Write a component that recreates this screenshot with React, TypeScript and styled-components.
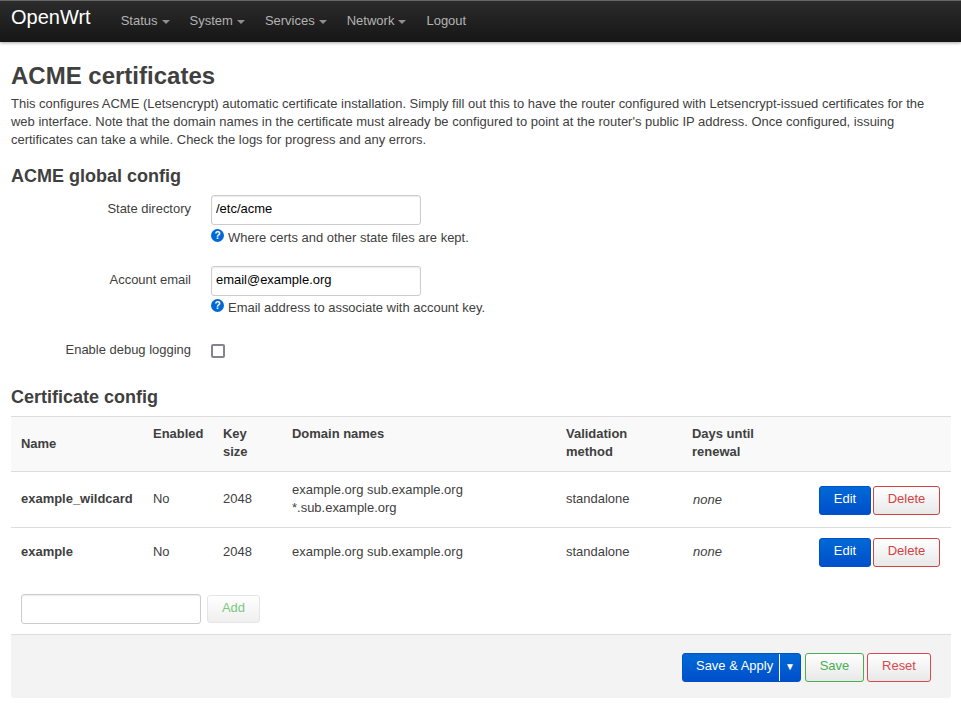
import styled, { createGlobalStyle, css } from "styled-components";

const GlobalStyle = createGlobalStyle`
  html, body {
    margin: 0;
    padding: 0;
    background: #fff;
    color: #404040;
    font-family: "Liberation Sans", Arial, sans-serif;
    font-size: 12.97px;
    line-height: 18px;
  }
  * { box-sizing: border-box; }
`;

const NavBar = styled.header`
  height: 42px;
  display: flex;
  align-items: stretch;
  padding-left: 11px;
  background: linear-gradient(to bottom, #2b2b2b, #161616);
  border-top: 1px solid #666;
  box-shadow: 0 1px 3px rgba(0, 0, 0, 0.35);
`;

const Brand = styled.a`
  color: #fff;
  font-size: 20px;
  line-height: 33px;
  margin-right: 20px;
`;

const NavItem = styled.a`
  color: #b3b3b3;
  font-size: 13px;
  height: 40px;
  padding: 0 10px;
  display: flex;
  align-items: center;
`;

const Caret = styled.span`
  display: inline-block;
  width: 0;
  height: 0;
  margin-left: 4px;
  margin-top: 2px;
  border-left: 4px solid transparent;
  border-right: 4px solid transparent;
  border-top: 4px solid #8f8f8f;
`;

const Main = styled.main`
  padding: 0 10px 0 11px;
`;

const Title = styled.h2`
  margin: 19px 0 0;
  font-size: 24px;
  line-height: 30px;
  font-weight: 700;
`;

const Intro = styled.p`
  margin: 4px 0 0;
`;

const SectionTitle = styled.h3<{ $top: number }>`
  margin: ${(p) => p.$top}px 0 0;
  font-size: 18px;
  line-height: 24px;
  font-weight: 700;
`;

const FieldRow = styled.div<{ $top: number }>`
  display: flex;
  margin-top: ${(p) => p.$top}px;
`;

const FieldLabel = styled.label`
  width: 180px;
  text-align: right;
  padding-top: 5px;
  margin-right: 20px;
  flex: none;
`;

const TextInput = styled.input<{ $width: number }>`
  display: block;
  width: ${(p) => p.$width}px;
  height: 30px;
  padding: 0 4px 3px;
  border: 1px solid #ccc;
  border-radius: 3px;
  background: #fff;
  color: #000;
  font: 12.97px/18px "Liberation Sans", Arial, sans-serif;
  box-shadow: inset 0 1px 1px rgba(0, 0, 0, 0.08);
  outline: none;
`;

const Hint = styled.div<{ $top: number }>`
  display: flex;
  align-items: flex-start;
  gap: 4px;
  margin-top: ${(p) => p.$top}px;
  height: 18px;
`;

const HelpIcon = styled.svg`
  width: 13px;
  height: 13px;
  flex: none;
`;

const CheckBox = styled.span`
  display: block;
  width: 14px;
  height: 14px;
  margin-top: 8px;
  border: 2px solid #85838e;
  border-radius: 2px;
  background: #fff;
`;

const Table = styled.table`
  width: 940px;
  margin-top: 7px;
  border-collapse: collapse;
  table-layout: fixed;
  border-top: 1px solid #ddd;
`;

const HeadRow = styled.tr`
  background: #f9f9f9;
`;

const HeadCell = styled.th<{ $top?: boolean }>`
  padding: 8px 10px;
  height: 55px;
  text-align: left;
  font-weight: 700;
  vertical-align: ${(p) => (p.$top ? "top" : "middle")};
  border-bottom: 1px solid #ddd;
`;

const Cell = styled.td<{ $height: number }>`
  padding: ${(p) => (p.$height > 50 ? "7px 10px 9px" : "8px 10px")};
  height: ${(p) => p.$height}px;
  border-bottom: ${(p) => (p.$height > 50 ? "1px solid #ddd" : "none")};
  vertical-align: middle;
`;

const NameCell = styled(Cell)`
  font-weight: 700;
`;

const NoneCell = styled(Cell)`
  padding: 8px 10px 8px 11px;
  font-style: italic;
`;

const ActionCell = styled(Cell)`
  padding: ${(p) => (p.$height > 50 ? "10px" : "8px")} 11px 8px 10px;
  text-align: right;
  white-space: nowrap;
`;

const buttonBase = css`
  display: inline-block;
  height: 29px;
  padding: 0 0 5px;
  border-radius: 3px;
  font: 12.97px/24px "Liberation Sans", Arial, sans-serif;
  vertical-align: top;
  text-align: center;
`;

const PrimaryButton = styled.button<{ $width: number }>`
  ${buttonBase}
  width: ${(p) => p.$width}px;
  color: #fff;
  border: 1px solid #0050c8;
  background: linear-gradient(to bottom, #0069d6, #004fcb);
`;

const OutlineButton = styled.button<{ $width: number; $tone: string; $gap?: number }>`
  ${buttonBase}
  width: ${(p) => p.$width}px;
  margin-left: ${(p) => p.$gap ?? 2}px;
  color: ${(p) => p.$tone};
  border: 1px solid ${(p) => p.$tone};
  background: linear-gradient(to bottom, #fff, #e8e8e8);
`;

const AddRow = styled.div`
  display: flex;
  align-items: flex-start;
  gap: 6px;
  margin-top: 17px;
  padding-left: 10px;
`;

const AddButton = styled.button`
  ${buttonBase}
  width: 53px;
  height: 28px;
  margin-top: 1px;
  padding-bottom: 3px;
  color: #79c87f;
  border: 1px solid #e6e6e6;
  background: linear-gradient(to bottom, #fff, #efefef);
`;

const ActionBar = styled.footer`
  display: flex;
  justify-content: flex-end;
  align-items: flex-start;
  height: 64px;
  margin-top: 10px;
  padding: 18px 20px 0 0;
  background: #f3f3f3;
  border-top: 1px solid #ddd;
  border-radius: 0 0 3px 3px;
`;

const SplitButton = styled.div`
  display: flex;
  width: 119px;
  height: 29px;
  color: #fff;
  border: 1px solid #0050c8;
  border-radius: 3px;
  background: linear-gradient(to bottom, #0069d6, #004fcb);
`;

const SplitLabel = styled.span`
  flex: 1;
  padding-left: 13px;
  line-height: 24px;
  white-space: nowrap;
  border-right: 1px solid #fff;
`;

const SplitArrow = styled.span`
  width: 20px;
  text-align: center;
  font-size: 10px;
  line-height: 26px;
`;

const Help = () => (
  <HelpIcon viewBox="0 0 16 16">
    <circle cx="8" cy="8" r="8" fill="#0069d6" />
    <text x="8" y="12.5" textAnchor="middle" fontSize="12.5" fontWeight="700" fill="#fff" fontFamily="Liberation Sans">
      ?
    </text>
  </HelpIcon>
);

const navItems = ["Status", "System", "Services", "Network"];

const columns = [132, 70, 69, 274, 126, 100, 169];

const certs = [
  { name: "example_wildcard", domains: ["example.org sub.example.org", "*.sub.example.org"], height: 56 },
  { name: "example", domains: ["example.org sub.example.org"], height: 49 },
];

function App() {
  return (
    <>
      <GlobalStyle />
      <NavBar>
        <Brand>OpenWrt</Brand>
        {navItems.map((item) => (
          <NavItem key={item}>
            {item}
            <Caret />
          </NavItem>
        ))}
        <NavItem>Logout</NavItem>
      </NavBar>
      <Main>
        <Title>ACME certificates</Title>
        <Intro>
          This configures ACME (Letsencrypt) automatic certificate installation. Simply fill out this to have the router
          configured with Letsencrypt-issued certificates for the web interface. Note that the domain names in the
          certificate must already be configured to point at the router's public IP address. Once configured, issuing
          certificates can take a while. Check the logs for progress and any errors.
        </Intro>

        <SectionTitle $top={15}>ACME global config</SectionTitle>
        <FieldRow $top={7}>
          <FieldLabel>State directory</FieldLabel>
          <div>
            <TextInput $width={210} defaultValue="/etc/acme" />
            <Hint $top={4}>
              <Help />
              Where certs and other state files are kept.
            </Hint>
          </div>
        </FieldRow>
        <FieldRow $top={19}>
          <FieldLabel>Account email</FieldLabel>
          <div>
            <TextInput $width={210} defaultValue="email@example.org" />
            <Hint $top={3}>
              <Help />
              Email address to associate with account key.
            </Hint>
          </div>
        </FieldRow>
        <FieldRow $top={19}>
          <FieldLabel>Enable debug logging</FieldLabel>
          <CheckBox />
        </FieldRow>

        <SectionTitle $top={26}>Certificate config</SectionTitle>
        <Table>
          <colgroup>
            {columns.map((width, i) => (
              <col key={i} style={{ width }} />
            ))}
          </colgroup>
          <thead>
            <HeadRow>
              <HeadCell>Name</HeadCell>
              <HeadCell $top>Enabled</HeadCell>
              <HeadCell $top>Key size</HeadCell>
              <HeadCell $top>Domain names</HeadCell>
              <HeadCell $top>Validation method</HeadCell>
              <HeadCell $top>Days until renewal</HeadCell>
              <HeadCell $top />
            </HeadRow>
          </thead>
          <tbody>
            {certs.map((cert) => (
              <tr key={cert.name}>
                <NameCell $height={cert.height}>{cert.name}</NameCell>
                <Cell $height={cert.height}>No</Cell>
                <Cell $height={cert.height}>2048</Cell>
                <Cell $height={cert.height}>
                  {cert.domains.map((line) => (
                    <div key={line}>{line}</div>
                  ))}
                </Cell>
                <Cell $height={cert.height}>standalone</Cell>
                <NoneCell $height={cert.height}>none</NoneCell>
                <ActionCell $height={cert.height}>
                  <PrimaryButton $width={52}>Edit</PrimaryButton>
                  <OutlineButton $width={67} $tone="#d14343">
                    Delete
                  </OutlineButton>
                </ActionCell>
              </tr>
            ))}
          </tbody>
        </Table>

        <AddRow>
          <TextInput $width={180} />
          <AddButton>Add</AddButton>
        </AddRow>

        <ActionBar>
          <SplitButton>
            <SplitLabel>Save &amp; Apply</SplitLabel>
            <SplitArrow>▼</SplitArrow>
          </SplitButton>
          <OutlineButton $width={59} $tone="#48b050" $gap={4}>
            Save
          </OutlineButton>
          <OutlineButton $width={64} $tone="#d9484c" $gap={3}>
            Reset
          </OutlineButton>
        </ActionBar>
      </Main>
    </>
  );
}

export default App;
